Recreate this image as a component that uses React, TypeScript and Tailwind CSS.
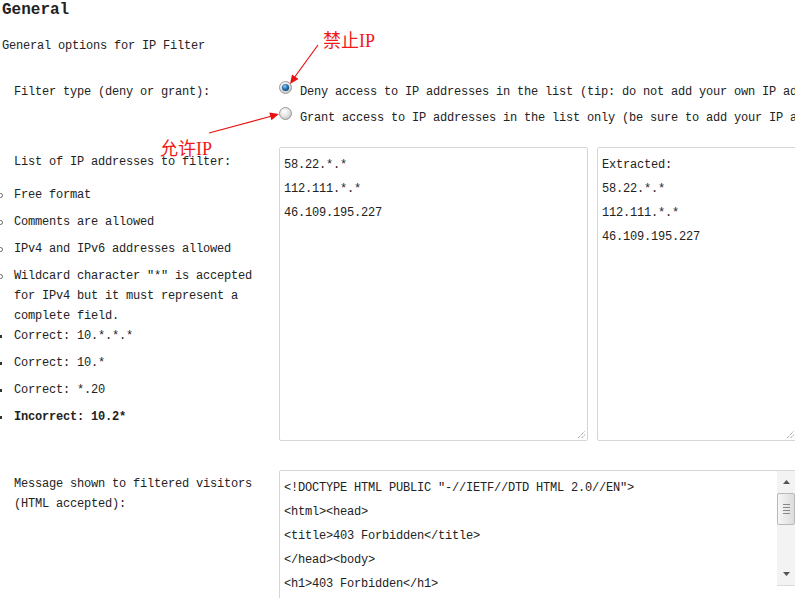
import React from 'react';

const mono = "font-['Liberation_Mono','DejaVu_Sans_Mono',monospace]";

function Radio({ checked }: { checked?: boolean }) {
  return (
    <svg width="13" height="13" viewBox="0 0 13 13" className="mt-[-1px] shrink-0">
      <defs>
        <radialGradient id="rg-off" cx="40%" cy="35%" r="70%">
          <stop offset="0%" stopColor="#ffffff" />
          <stop offset="60%" stopColor="#e2e2e2" />
          <stop offset="100%" stopColor="#b8b8b8" />
        </radialGradient>
        <radialGradient id="rg-on" cx="40%" cy="35%" r="70%">
          <stop offset="0%" stopColor="#9fd0f0" />
          <stop offset="45%" stopColor="#2f7fbf" />
          <stop offset="100%" stopColor="#0d3f6e" />
        </radialGradient>
      </defs>
      <circle cx="6.5" cy="6.5" r="6" fill="url(#rg-off)" stroke="#9a9a9a" strokeWidth="1" />
      {checked && <circle cx="6.5" cy="6.5" r="3.6" fill="url(#rg-on)" />}
    </svg>
  );
}

function Grip() {
  return (
    <svg width="9" height="9" viewBox="0 0 9 9" className="absolute bottom-[1px] right-[1px]">
      <line x1="1" y1="8" x2="8" y2="1" stroke="#777" strokeWidth="1" strokeDasharray="1 1" />
      <line x1="4.5" y1="8" x2="8" y2="4.5" stroke="#777" strokeWidth="1" strokeDasharray="1 1" />
    </svg>
  );
}

const bullets: { text: React.ReactNode; kind: 'circle' | 'square'; mt: string; bold?: boolean }[] = [
  { text: 'Free format', kind: 'circle', mt: 'mt-0' },
  { text: 'Comments are allowed', kind: 'circle', mt: 'mt-[7px]' },
  { text: 'IPv4 and IPv6 addresses allowed', kind: 'circle', mt: 'mt-[7px]' },
  {
    text: (
      <>
        Wildcard character "*" is accepted
        <br />
        for IPv4 but it must represent a
        <br />
        complete field.
      </>
    ),
    kind: 'circle',
    mt: 'mt-[7px]',
  },
  { text: 'Correct: 10.*.*.*', kind: 'square', mt: 'mt-0' },
  { text: 'Correct: 10.*', kind: 'square', mt: 'mt-[7px]' },
  { text: 'Correct: *.20', kind: 'square', mt: 'mt-[7px]' },
  { text: 'Incorrect: 10.2*', kind: 'square', mt: 'mt-[7px]', bold: true },
];

const ipList = ['58.22.*.*', '112.111.*.*', '46.109.195.227'];

const message = [
  '<!DOCTYPE HTML PUBLIC "-//IETF//DTD HTML 2.0//EN">',
  '<html><head>',
  '<title>403 Forbidden</title>',
  '</head><body>',
  '<h1>403 Forbidden</h1>',
];

export default function App() {
  return (
    <div
      className={`relative h-[598px] w-[795px] overflow-hidden bg-white pt-[2px] text-[12px] leading-5 tracking-[-0.2px] text-[#222] ${mono}`}
    >
      <h1 className="pl-[2px] text-[16px] font-bold leading-4 tracking-normal">General</h1>
      <p className="mt-[18px] pl-[2px]">General options for IP Filter</p>

      {/* Filter type */}
      <div className="mt-[26px] flex">
        <div className="w-[279px] shrink-0 pl-[14px]">Filter type (deny or grant):</div>
        <div className="flex flex-col gap-[6px] whitespace-nowrap">
          <label className="flex items-start gap-[8px]">
            <Radio checked />
            <span>Deny access to IP addresses in the list (tip: do not add your own IP address)</span>
          </label>
          <label className="flex items-start gap-[8px]">
            <Radio />
            <span>Grant access to IP addresses in the list only (be sure to add your IP address)</span>
          </label>
        </div>
      </div>

      {/* IP list */}
      <div className="mt-[19px] flex">
        <div className="w-[279px] shrink-0">
          <div className="pl-[14px] pt-[5px]">List of IP addresses to filter:</div>
          <ul className="mt-[13px] whitespace-nowrap">
            {bullets.map((b, i) => (
              <li key={i} className={`flex ${b.mt}`}>
                {b.kind === 'circle' ? (
                  <span className="ml-[-2px] mr-[11px] mt-[8px] h-[5px] w-[5px] shrink-0 rounded-full border border-[#666]" />
                ) : (
                  <span className="ml-[-1px] mr-[12px] mt-[9px] h-[3px] w-[3px] shrink-0 bg-[#333]" />
                )}
                <span className={b.bold ? 'font-bold' : ''}>{b.text}</span>
              </li>
            ))}
          </ul>
        </div>
        <div className="flex gap-[9px]">
          <div className="relative h-[294px] w-[309px] shrink-0 rounded-[2px] border border-[#d6d6d6] pl-[4px] pt-[5px] leading-6">
            {ipList.map((ip) => (
              <div key={ip}>{ip}</div>
            ))}
            <Grip />
          </div>
          <div className="relative h-[294px] w-[200px] shrink-0 rounded-[2px] border border-[#d6d6d6] pl-[4px] pt-[5px] leading-6">
            <div>Extracted:</div>
            {ipList.map((ip) => (
              <div key={ip}>{ip}</div>
            ))}
            <Grip />
          </div>
        </div>
      </div>

      {/* Message */}
      <div className="mt-[29px] flex">
        <div className="w-[279px] shrink-0 pl-[14px] pt-[4px]">
          Message shown to filtered visitors
          <br />
          (HTML accepted):
        </div>
        <div className="flex h-[140px] w-[517px] shrink-0 rounded-[2px] border border-[#d6d6d6]">
          <div className="flex-1 whitespace-nowrap pl-[4px] pt-[5px] leading-6">
            {message.map((line, i) => (
              <div key={i}>{line}</div>
            ))}
          </div>
          <div className="flex w-[18px] shrink-0 flex-col bg-[#f3f3f3]">
            <div className="flex h-[22px] items-center justify-center">
              <svg width="7" height="4" viewBox="0 0 7 4">
                <polygon points="3.5,0 7,4 0,4" fill="#555" />
              </svg>
            </div>
            <div className="flex h-[32px] items-center justify-center rounded-[2px] border border-[#b9b9b9] bg-gradient-to-r from-[#f6f6f6] to-[#dcdcdc]">
              <div className="flex flex-col gap-[2px]">
                <span className="h-px w-[7px] bg-[#888]" />
                <span className="h-px w-[7px] bg-[#888]" />
                <span className="h-px w-[7px] bg-[#888]" />
                <span className="h-px w-[7px] bg-[#888]" />
              </div>
            </div>
            <div className="flex-1" />
            <div className="flex h-[22px] items-center justify-center">
              <svg width="7" height="4" viewBox="0 0 7 4">
                <polygon points="0,0 7,0 3.5,4" fill="#555" />
              </svg>
            </div>
            <div className="relative h-[24px] border-t border-[#dcdcdc] bg-white">
              <Grip />
            </div>
          </div>
        </div>
      </div>

      {/* Annotations */}
      <svg width="795" height="598" className="pointer-events-none absolute left-0 top-0">
        <line x1="318" y1="45" x2="294" y2="78" stroke="#e81010" strokeWidth="1.2" />
        <polygon points="290,84 298.5,79 292,74.4" fill="#e81010" />
        <line x1="209" y1="133" x2="272" y2="116" stroke="#e81010" strokeWidth="1.2" />
        <polygon points="279,114 271.4,120.3 269.3,112.5" fill="#e81010" />
      </svg>
      <span className="absolute left-[323px] top-[31px] text-[18px] leading-5 tracking-normal text-[#f01818] font-['Liberation_Serif','Noto_Sans_CJK_SC',serif]">
        禁止IP
      </span>
      <span className="absolute left-[160px] top-[139px] text-[18px] leading-5 tracking-normal text-[#f01818] font-['Liberation_Serif','Noto_Sans_CJK_SC',serif]">
        允许IP
      </span>
    </div>
  );
}
